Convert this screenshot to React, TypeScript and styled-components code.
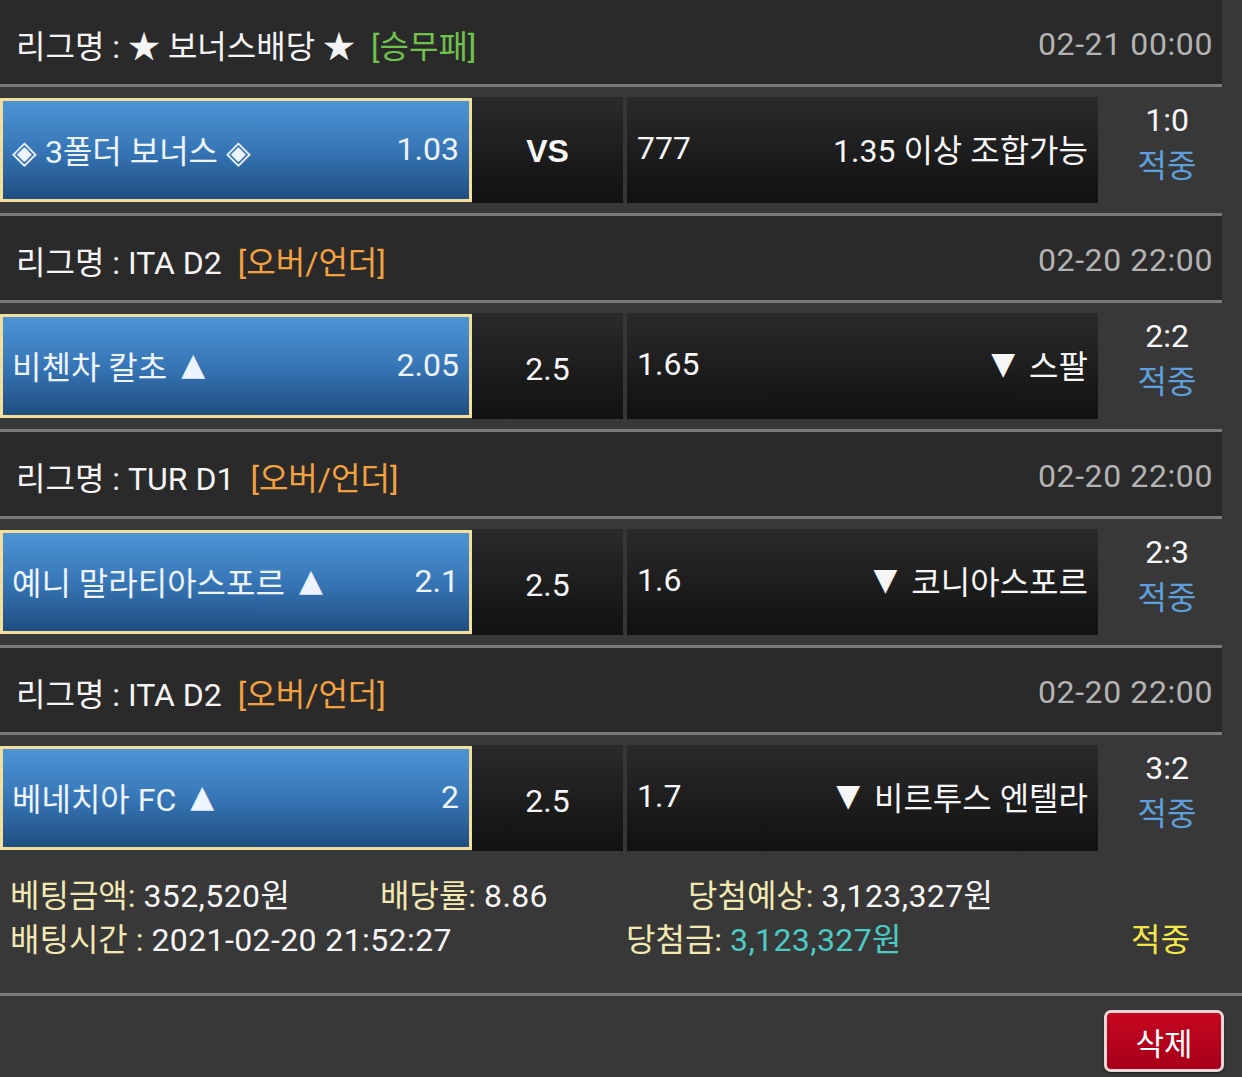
import React from "react";
import styled, { createGlobalStyle } from "styled-components";

const Global = createGlobalStyle`
  html, body { margin: 0; padding: 0; background: #383838; }
  body { font-family: Roboto, "Noto Sans CJK KR", "Noto Sans", sans-serif; color: #f2f2f2; }
  * { box-sizing: border-box; }
`;

const Page = styled.div`
  width: 1242px;
  min-height: 1077px;
  background: #383838;
  overflow: hidden;
`;

const List = styled.div`
  width: 1222px;
`;

const Header = styled.div`
  height: 84px;
  background: #2a2a2a;
  display: flex;
  align-items: center;
  justify-content: space-between;
  padding: 4px 9px 0 16px;
  font-size: 32px;
`;

const League = styled.span`
  color: #f4f4f4;
  white-space: pre;
`;

const Market = styled.span<{ $color: string }>`
  color: ${(p) => p.$color};
  margin-left: 16px;
`;

const DateText = styled.span`
  color: #b3b3b3;
  letter-spacing: 0.6px;
`;

const Divider = styled.div<{ $full?: boolean }>`
  height: 3px;
  background: #7a7a7a;
  width: ${(p) => (p.$full ? "1242px" : "1222px")};
`;

const MatchRow = styled.div`
  height: 126px;
  display: flex;
  align-items: center;
`;

const TeamCell = styled.div`
  width: 472px;
  height: 104px;
  border: 3px solid #f3de9c;
  background: linear-gradient(to bottom, #4e95d6 0%, #3776b6 50%, #1f4e80 100%);
  display: flex;
  align-items: center;
  justify-content: space-between;
  padding: 0 10px 3px 9px;
  font-size: 32px;
  color: #eef4ff;
  white-space: pre;
`;

const Tri = styled.span<{ $side: "left" | "right" }>`
  display: inline-block;
  font-family: "DejaVu Sans", sans-serif;
  font-size: 31px;
  line-height: 1;
  vertical-align: 4px;
  margin: ${(p) => (p.$side === "left" ? "0 0 0 14px" : "0 14px 0 0")};
`;

const DarkCell = styled.div`
  height: 106px;
  background: linear-gradient(to bottom, #2b2b2b 0%, #1b1b1b 60%, #111111 100%);
  display: flex;
  align-items: center;
  font-size: 32px;
  color: #f6f6f6;
`;

const MidCell = styled(DarkCell)<{ $bold?: boolean }>`
  width: 151px;
  justify-content: center;
  padding-top: ${(p) => (p.$bold ? "2px" : "6px")};
  font-weight: ${(p) => (p.$bold ? 700 : 400)};
  font-family: ${(p) => (p.$bold ? '"Liberation Sans", Arial, sans-serif' : "inherit")};
`;

const OddsCell = styled(DarkCell)`
  width: 475px;
  border-left: 4px solid #363636;
  justify-content: space-between;
  padding: 0 10px 4px 10px;
  white-space: pre;
`;

const ScoreCell = styled.div`
  flex: 1;
  height: 106px;
  display: flex;
  flex-direction: column;
  align-items: center;
  justify-content: center;
  font-size: 32px;
  line-height: 46px;
  padding: 0 0 14px 14px;
`;

const Score = styled.span`
  color: #f6f6f6;
`;

const Result = styled.span`
  color: #5e9fdb;
`;

const Footer = styled.div`
  padding: 13px 0 31px 10px;
  font-size: 32px;
  line-height: 44px;
`;

const FooterLine = styled.div`
  display: flex;
  white-space: pre;
`;

const Field = styled.span<{ $w: number }>`
  width: ${(p) => p.$w}px;
  flex: none;
`;

const Label = styled.span`
  color: #f1e8b2;
`;

const Value = styled.span<{ $color?: string }>`
  color: ${(p) => p.$color || "#f6f6f6"};
  letter-spacing: 0.4px;
`;

const ButtonBar = styled.div`
  display: flex;
  justify-content: flex-end;
  padding: 14px 18px 0 0;
`;

const DeleteButton = styled.button`
  width: 120px;
  height: 62px;
  border: 3px solid #ecd6d8;
  border-radius: 7px;
  background: linear-gradient(to bottom, #c4071f, #a8001a);
  color: #fff;
  font-family: Roboto, "Noto Sans CJK KR", sans-serif;
  font-size: 31px;
  padding: 0;
  box-shadow: 0 1px 2px rgba(0, 0, 0, 0.5);
`;

type Match = {
  league: string;
  market: string;
  marketColor: string;
  date: string;
  team: string;
  up?: boolean;
  odds: string;
  mid: string;
  bold?: boolean;
  left: string;
  right: string;
  down?: boolean;
  score: string;
};

const matches: Match[] = [
  {
    league: "리그명 : ★ 보너스배당 ★",
    market: "[승무패]",
    marketColor: "#6fc24c",
    date: "02-21 00:00",
    team: "◈ 3폴더 보너스 ◈",
    odds: "1.03",
    mid: "VS",
    bold: true,
    left: "777",
    right: "1.35 이상 조합가능",
    score: "1:0",
  },
  {
    league: "리그명 : ITA D2",
    market: "[오버/언더]",
    marketColor: "#f2a140",
    date: "02-20 22:00",
    team: "비첸차 칼초",
    up: true,
    odds: "2.05",
    mid: "2.5",
    left: "1.65",
    right: "스팔",
    down: true,
    score: "2:2",
  },
  {
    league: "리그명 : TUR D1",
    market: "[오버/언더]",
    marketColor: "#f2a140",
    date: "02-20 22:00",
    team: "예니 말라티아스포르",
    up: true,
    odds: "2.1",
    mid: "2.5",
    left: "1.6",
    right: "코니아스포르",
    down: true,
    score: "2:3",
  },
  {
    league: "리그명 : ITA D2",
    market: "[오버/언더]",
    marketColor: "#f2a140",
    date: "02-20 22:00",
    team: "베네치아 FC",
    up: true,
    odds: "2",
    mid: "2.5",
    left: "1.7",
    right: "비르투스 엔텔라",
    down: true,
    score: "3:2",
  },
];

export default function App() {
  return (
    <Page>
      <Global />
      <List>
        {matches.map((m, i) => (
          <React.Fragment key={i}>
            <Header>
              <span>
                <League>{m.league}</League>
                <Market $color={m.marketColor}>{m.market}</Market>
              </span>
              <DateText>{m.date}</DateText>
            </Header>
            <Divider />
            <MatchRow>
              <TeamCell>
                <span>
                  {m.team}
                  {m.up && <Tri $side="left">▲</Tri>}
                </span>
                <span>{m.odds}</span>
              </TeamCell>
              <MidCell $bold={m.bold}>{m.mid}</MidCell>
              <OddsCell>
                <span>{m.left}</span>
                <span>
                  {m.down && <Tri $side="right">▼</Tri>}
                  {m.right}
                </span>
              </OddsCell>
              <ScoreCell>
                <Score>{m.score}</Score>
                <Result>적중</Result>
              </ScoreCell>
            </MatchRow>
            {i < matches.length - 1 && <Divider />}
          </React.Fragment>
        ))}
      </List>
      <Footer>
        <FooterLine>
          <Field $w={370}>
            <Label>베팅금액: </Label>
            <Value>352,520원</Value>
          </Field>
          <Field $w={308}>
            <Label>배당률: </Label>
            <Value>8.86</Value>
          </Field>
          <Field $w={400}>
            <Label>당첨예상: </Label>
            <Value>3,123,327원</Value>
          </Field>
        </FooterLine>
        <FooterLine>
          <Field $w={616}>
            <Label>배팅시간 : </Label>
            <Value>2021-02-20 21:52:27</Value>
          </Field>
          <Field $w={505}>
            <Label>당첨금: </Label>
            <Value $color="#4ccbc6">3,123,327원</Value>
          </Field>
          <Field $w={100}>
            <Value $color="#f3e64a">적중</Value>
          </Field>
        </FooterLine>
      </Footer>
      <Divider $full />
      <ButtonBar>
        <DeleteButton>삭제</DeleteButton>
      </ButtonBar>
    </Page>
  );
}
